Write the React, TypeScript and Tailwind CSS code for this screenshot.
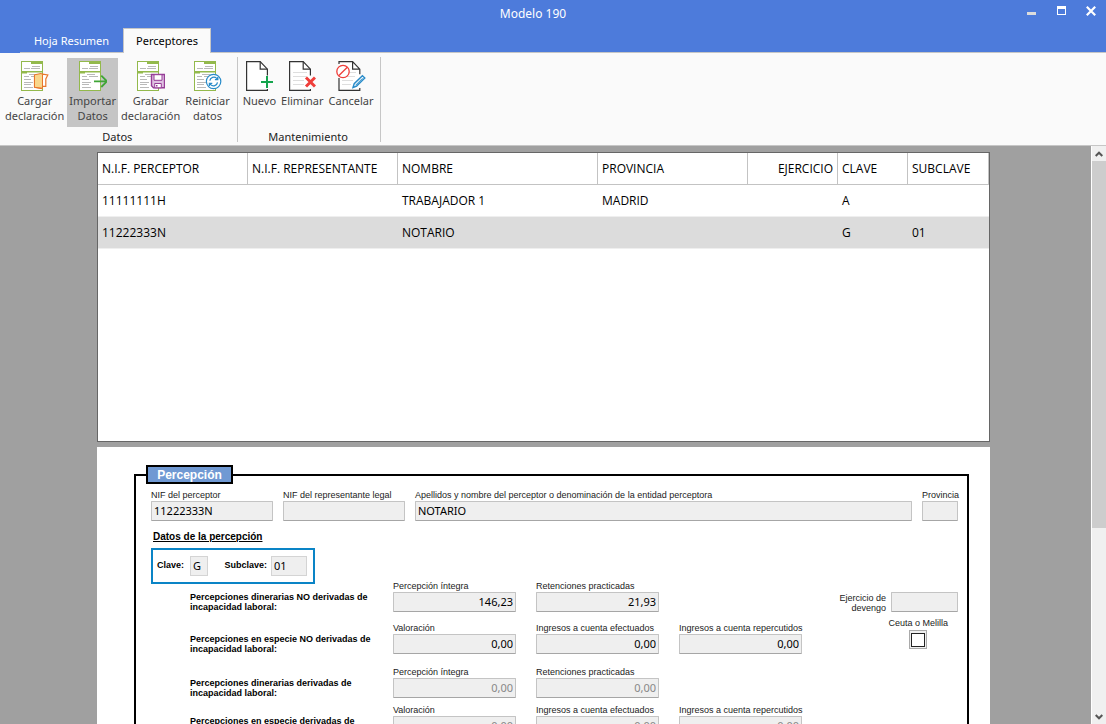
import { useState } from "react";
import type { ReactNode } from "react";
import clsx from "clsx";

interface Perceptor {
  nif: string;
  representante: string;
  nombre: string;
  provincia: string;
  ejercicio: string;
  clave: string;
  subclave: string;
}

const perceptores: Perceptor[] = [
  { nif: "11111111H", representante: "", nombre: "TRABAJADOR 1", provincia: "MADRID", ejercicio: "", clave: "A", subclave: "" },
  { nif: "11222333N", representante: "", nombre: "NOTARIO", provincia: "", ejercicio: "", clave: "G", subclave: "01" },
];

const columns: { key: keyof Perceptor; title: string; width: string; right?: boolean }[] = [
  { key: "nif", title: "N.I.F. PERCEPTOR", width: "w-[150px]" },
  { key: "representante", title: "N.I.F. REPRESENTANTE", width: "w-[150px]" },
  { key: "nombre", title: "NOMBRE", width: "w-[200px]" },
  { key: "provincia", title: "PROVINCIA", width: "w-[150px]" },
  { key: "ejercicio", title: "EJERCICIO", width: "w-[90px]", right: true },
  { key: "clave", title: "CLAVE", width: "w-[70px]" },
  { key: "subclave", title: "SUBCLAVE", width: "" },
];

/* ---------- Icons ---------- */

function GreenSheet({ children }: { children: ReactNode }) {
  return (
    <svg width="28" height="30" viewBox="0 0 28 30" fill="none" aria-hidden="true">
      <rect x="0.5" y="0.5" width="21" height="29" fill="#fff" stroke="#93b94c" />
      <path d="M10 0h12v3H10z M0 10h22v1.4H0z M0 10h6v2.6H0z" fill="#93b94c" />
      <path d="M11 5.5h8M3 7.5h6M10 7.5h9M8 13.5h8M3 15.5h5M10 15.5h9M3 18.5h7M3 21.5h9M3 23.5h7M3 26.5h9" stroke="#b9b9b9" />
      {children}
    </svg>
  );
}

const LoadIcon = () => (
  <GreenSheet>
    <path d="M13.5 14.5v11.7l7 1.3 1.3-2.2h3V18l2-4-5.3-.8z" fill="#fff" stroke="#e8762c" strokeWidth="1.2" />
    <path d="M13.5 13.8 20 12.5l1.5.8v13.9l-8-.9z" fill="#f9d68b" stroke="#e8762c" />
  </GreenSheet>
);

const ImportIcon = () => (
  <GreenSheet>
    <path d="M15 20.3h13M22.3 14.6l5.7 5.7-5.7 5.7" stroke="#3fa535" strokeWidth="1.8" />
  </GreenSheet>
);

const SaveIcon = () => (
  <GreenSheet>
    <path d="M14.5 13.5h13v13.3h-11l-2-2z" fill="#dfc1e2" stroke="#963d97" strokeWidth="1.4" />
    <path d="M17 13.7h8v5.6h-8z" fill="#fff" stroke="#963d97" />
    <path d="M17.7 22.5h6.6v4.3h-6.6z" fill="#fff" stroke="#963d97" />
    <path d="M19 24h1.5v1.5H19z" fill="#963d97" />
  </GreenSheet>
);

const ResetIcon = () => (
  <GreenSheet>
    <circle cx="19.6" cy="20.5" r="7.2" fill="#fff" stroke="#288bc9" strokeWidth="1.2" />
    <path d="M15.8 19.7a4.1 4.1 0 0 1 6.9-2.3l1 1M23.8 16v2.7h-2.9M23.5 21.3a4.1 4.1 0 0 1-6.9 2.3l-1-1M15.4 25v-2.7h2.9" stroke="#288bc9" strokeWidth="1.3" />
  </GreenSheet>
);

function BlankPage({ lines, children }: { lines?: boolean; children: ReactNode }) {
  return (
    <svg width="27" height="30" viewBox="0 0 27 30" fill="none" aria-hidden="true">
      <path d="M.6.6h13.6l7.2 7.6v21.2H.6z" fill="#fff" />
      <path d="M21.4 14.5V8.2L14.2.6H.6v28.8h20.8V28" stroke="#333" strokeWidth="1.2" />
      <path d="M14.2.6v7.6h7.2" stroke="#333" strokeWidth="1.2" />
      {lines && <path d="M4 11.5h14M4 15.5h14M4 19.5h11M4 23.5h11" stroke="#dedede" />}
      {children}
    </svg>
  );
}

const NewIcon = () => (
  <BlankPage>
    <path d="M21 15v12M15 21h12" stroke="#14a44d" strokeWidth="2" />
  </BlankPage>
);

const DeleteIcon = () => (
  <BlankPage lines>
    <path d="m17 16.5 9 9M26 16.5l-9 9" stroke="#ef3e3a" strokeWidth="3" />
  </BlankPage>
);

const CancelIcon = () => (
  <svg width="30" height="30" viewBox="0 0 30 30" fill="none" aria-hidden="true">
    <path d="M3 .6h13.6l7.2 7.6v21.2H3z" fill="#fff" />
    <path d="M3 3V.6h13.6l7.2 7.6v5M23.8 27v2.4H3V17M16.6.6v7.6h7.2" stroke="#333" strokeWidth="1.2" />
    <path d="M13 11.5h7M6 19.5h11M6 23.5h9M9 15.5h10" stroke="#dedede" />
    <circle cx="7" cy="10.5" r="6.2" fill="#fff" stroke="#ef3e3a" strokeWidth="1.3" />
    <path d="m2.7 14.8 8.6-8.6" stroke="#ef3e3a" strokeWidth="1.3" />
    <path d="m17 26.5 1.2-3.8 8.2-8 2.4 2.4-8.2 8z" fill="#fff" stroke="#288bc9" strokeWidth="1.4" />
    <path d="m19.5 24.3 7-7" stroke="#288bc9" />
  </svg>
);

/* ---------- Ribbon ---------- */

interface RibbonButtonProps {
  icon: ReactNode;
  lines: string[];
  active?: boolean;
}

function RibbonButton({ icon, lines, active }: RibbonButtonProps) {
  return (
    <button
      type="button"
      className={clsx(
        "flex h-[69px] flex-col items-center gap-0.5 px-0.5 pt-[3px] text-[11px] leading-[15px] text-[#444]",
        active ? "bg-[#c5c5c5]" : "hover:bg-[#e4e4e4]"
      )}
    >
      {icon}
      <span className="flex flex-col items-center whitespace-nowrap">
        {lines.map((line) => (
          <span key={line}>{line}</span>
        ))}
      </span>
    </button>
  );
}

function RibbonGroup({ title, children }: { title: string; children: ReactNode }) {
  return (
    <section className="flex flex-col justify-between border-r border-[#c6c6c6] pr-[5px] pl-[3px]">
      <div className="flex gap-px pt-px">{children}</div>
      <h2 className="text-center text-[11px] leading-[10px] text-[#222]">{title}</h2>
    </section>
  );
}

/* ---------- Form ---------- */

interface FieldProps {
  id: string;
  label: string;
  value?: string;
  className?: string;
  right?: boolean;
  dim?: boolean;
}

const inputStyle = "h-5 w-full min-w-0 rounded-[1px] border border-[#c4c4c4] border-b-[#a6a6a6] bg-[#efefef] px-0.5 pb-0.5 text-[11px] leading-4";

function Field({ id, label, value = "", className, right, dim }: FieldProps) {
  return (
    <div className={clsx("flex flex-col", className)}>
      <label htmlFor={id} className="whitespace-nowrap font-['Liberation_Sans',sans-serif] text-[9px] leading-[11px] text-[#222]">
        {label}
      </label>
      <input
        id={id}
        defaultValue={value}
        readOnly
        className={clsx(inputStyle, right && "text-right", dim ? "text-[#888]" : "text-black")}
      />
    </div>
  );
}

interface AmountRowProps {
  id: string;
  text: string[];
  fields: { label: string; value: string }[];
  dim?: boolean;
}

function AmountRow({ id, text, fields, dim }: AmountRowProps) {
  return (
    <div className="flex gap-5">
      <p className="w-[183px] shrink-0 whitespace-nowrap pt-[11px] font-['Liberation_Sans',sans-serif] text-[9px] font-bold leading-[10px] text-black">
        {text[0]}
        <br />
        {text[1]}
      </p>
      {fields.map((field, i) => (
        <Field key={field.label} id={`${id}-${i}`} label={field.label} value={field.value} className="w-[123px]" right dim={dim} />
      ))}
    </div>
  );
}

export default function App() {
  const [selected, setSelected] = useState(1);

  return (
    <div className="flex h-screen flex-col overflow-hidden bg-[#a0a0a0] font-['Noto_Sans','Open_Sans',sans-serif] text-black">
      {/* Title bar + tabs */}
      <header className="flex h-[53px] shrink-0 flex-col justify-between bg-[#4d7bdb]">
        <div className="flex h-7 items-center">
          <h1 className="flex-1 pl-10 text-center text-[12px] text-white">Modelo 190</h1>
          <div className="flex items-center gap-5 pr-2.5 pb-1.5">
            <button type="button" aria-label="Minimizar">
              <svg width="10" height="10" viewBox="0 0 10 10"><path d="M1 6h9v3H1z" fill="#dcdcdc" /></svg>
            </button>
            <button type="button" aria-label="Maximizar">
              <svg width="10" height="10" viewBox="0 0 10 10"><path d="M1 0h9v9H1zM2 3v5h7V3z" fill="#fff" fillRule="evenodd" /></svg>
            </button>
            <button type="button" aria-label="Cerrar">
              <svg width="10" height="10" viewBox="0 0 10 10"><path d="m.8.8 8.4 8.4M9.2.8.8 9.2" stroke="#fff" strokeWidth="2.2" /></svg>
            </button>
          </div>
        </div>
        <nav className="ml-5 flex h-[25px] border-b border-[#c6c6c6] text-[11px]">
          <button type="button" className="w-[103px] pt-0.5 text-white">Hoja Resumen</button>
          <button type="button" className="-mb-px w-[88px] border border-b-0 border-[#c6c6c6] bg-[#fafafa] text-black">
            Perceptores
          </button>
        </nav>
      </header>

      {/* Ribbon */}
      <div className="flex h-[93px] shrink-0 border-b border-[#c6c6c6] bg-[#fafafa] pt-1 pb-[3px]">
        <RibbonGroup title="Datos">
          <RibbonButton icon={<LoadIcon />} lines={["Cargar", "declaración"]} />
          <RibbonButton icon={<ImportIcon />} lines={["Importar", "Datos"]} active />
          <RibbonButton icon={<SaveIcon />} lines={["Grabar", "declaración"]} />
          <RibbonButton icon={<ResetIcon />} lines={["Reiniciar", "datos"]} />
        </RibbonGroup>
        <RibbonGroup title="Mantenimiento">
          <RibbonButton icon={<NewIcon />} lines={["Nuevo"]} />
          <RibbonButton icon={<DeleteIcon />} lines={["Eliminar"]} />
          <RibbonButton icon={<CancelIcon />} lines={["Cancelar"]} />
        </RibbonGroup>
      </div>

      <div className="flex min-h-0 flex-1">
        <main className="flex min-w-0 flex-1 justify-center overflow-hidden pr-1">
          <div className="flex w-full max-w-[893px] flex-col gap-[5px] pt-1.5">
            {/* Grid */}
            <div className="h-[290px] shrink-0 border border-[#666] bg-white">
              <table className="w-full table-fixed border-separate border-spacing-0 font-['Open_Sans','Noto_Sans',sans-serif] text-[12px]">
                <thead>
                  <tr className="h-8">
                    {columns.map((col) => (
                      <th
                        key={col.key}
                        className={clsx(
                          "whitespace-nowrap border-r border-b border-[#c3c3c3] px-1 font-normal",
                          col.width,
                          col.right ? "text-right" : "text-left"
                        )}
                      >
                        {col.title}
                      </th>
                    ))}
                  </tr>
                </thead>
                <tbody>
                  {perceptores.map((row, i) => (
                    <tr key={row.nif} className={clsx("h-8", selected === i && "bg-[#dcdcdc]")} onClick={() => setSelected(i)}>
                      {columns.map((col) => (
                        <td key={col.key} className="border-b border-[#efefef] px-1">{row[col.key]}</td>
                      ))}
                    </tr>
                  ))}
                </tbody>
              </table>
            </div>

            {/* Detail form */}
            <form className="flex-1 bg-white pt-[18px] pr-[21px] pl-[37px]">
              <fieldset className="h-[600px] border-2 border-black pr-[9px] pl-[15px]">
                <legend className="-ml-[5px] flex h-[19px] w-[87px] items-center justify-center border-2 border-black bg-[#7099d3] font-['Liberation_Sans',sans-serif] text-[12px] font-bold text-white">
                  Percepción
                </legend>

                <div className="flex gap-2.5 pt-1.5">
                  <Field id="nif" label="NIF del perceptor" value="11222333N" className="w-[122px]" />
                  <Field id="representante" label="NIF del representante legal" className="w-[122px]" />
                  <Field id="nombre" label="Apellidos y nombre del perceptor o denominación de la entidad perceptora" value="NOTARIO" className="flex-1" />
                  <Field id="provincia" label="Provincia" className="w-9" />
                </div>

                <h3 className="mt-2.5 pl-0.5 font-['Liberation_Sans',sans-serif] text-[10px] font-bold leading-[11px] underline">
                  Datos de la percepción
                </h3>

                <div className="mt-1.5 flex h-9 w-[164px] items-center border-2 border-[#0a84c6] pr-1.5 pl-1 font-['Liberation_Sans',sans-serif] text-[9px] font-bold">
                  <label htmlFor="clave" className="w-[33px] shrink-0">Clave:</label>
                  <input id="clave" readOnly defaultValue="G" className="h-5 w-[18px] border border-[#d4d4d4] bg-[#efefef] px-0.5 pb-0.5 font-['Noto_Sans',sans-serif] text-[11px] font-normal" />
                  <label htmlFor="subclave" className="flex-1 pr-1 text-right">Subclave:</label>
                  <input id="subclave" readOnly defaultValue="01" className="h-5 w-9 border border-[#d4d4d4] bg-[#efefef] px-0.5 pb-0.5 font-['Noto_Sans',sans-serif] text-[11px] font-normal" />
                </div>

                <div className="-mt-[3px] flex justify-between pl-[39px]">
                  <div className="flex flex-col gap-[13px]">
                    <div className="flex flex-col gap-[11px]">
                      <AmountRow
                        id="din-no"
                        text={["Percepciones dinerarias NO derivadas de", "incapacidad laboral:"]}
                        fields={[
                          { label: "Percepción íntegra", value: "146,23" },
                          { label: "Retenciones practicadas", value: "21,93" },
                        ]}
                      />
                      <AmountRow
                        id="esp-no"
                        text={["Percepciones en especie NO derivadas de", "incapacidad laboral:"]}
                        fields={[
                          { label: "Valoración", value: "0,00" },
                          { label: "Ingresos a cuenta efectuados", value: "0,00" },
                          { label: "Ingresos a cuenta repercutidos", value: "0,00" },
                        ]}
                      />
                    </div>
                    <div className="flex flex-col gap-[7px]">
                      <AmountRow
                        id="din"
                        text={["Percepciones dinerarias derivadas de", "incapacidad laboral:"]}
                        fields={[
                          { label: "Percepción íntegra", value: "0,00" },
                          { label: "Retenciones practicadas", value: "0,00" },
                        ]}
                        dim
                      />
                      <AmountRow
                        id="esp"
                        text={["Percepciones en especie derivadas de", "incapacidad laboral:"]}
                        fields={[
                          { label: "Valoración", value: "0,00" },
                          { label: "Ingresos a cuenta efectuados", value: "0,00" },
                          { label: "Ingresos a cuenta repercutidos", value: "0,00" },
                        ]}
                        dim
                      />
                    </div>
                  </div>

                  <div className="flex flex-col items-end pt-[11px] font-['Liberation_Sans',sans-serif] text-[9px] leading-[10px] text-[#222]">
                    <div className="flex items-start gap-[5px]">
                      <label htmlFor="devengo" className="pt-px text-right">
                        Ejercicio de
                        <br />
                        devengo
                      </label>
                      <span className="w-[67px]">
                        <input id="devengo" readOnly className={inputStyle} />
                      </span>
                    </div>
                    <label className="flex flex-col items-center gap-0.5 pt-[5px] pr-2.5">
                      Ceuta o Melilla
                      <span className="flex h-[19px] w-[18px] items-center justify-center border border-[#aaa] bg-[#efefef]">
                        <input type="checkbox" className="size-[14px] appearance-none border border-[#222] bg-white checked:bg-[#222]" />
                      </span>
                    </label>
                  </div>
                </div>
              </fieldset>
            </form>
          </div>
        </main>

        {/* Vertical scrollbar */}
        <div className="flex w-[15px] shrink-0 flex-col border-l border-white bg-[#f0f0f0]">
          <button type="button" aria-label="Subir" className="flex h-[15px] items-center justify-center">
            <svg width="8" height="6" viewBox="0 0 8 6" fill="none"><path d="m.7 5 3.3-3.3L7.3 5" stroke="#555" strokeWidth="2" /></svg>
          </button>
          <div className="flex-1">
            <div className="h-[67%] bg-[#cdcdcd]" />
          </div>
          <button type="button" aria-label="Bajar" className="flex h-[15px] items-center justify-center">
            <svg width="8" height="6" viewBox="0 0 8 6" fill="none"><path d="M.7 1 4 4.3 7.3 1" stroke="#555" strokeWidth="2" /></svg>
          </button>
        </div>
      </div>
    </div>
  );
}
